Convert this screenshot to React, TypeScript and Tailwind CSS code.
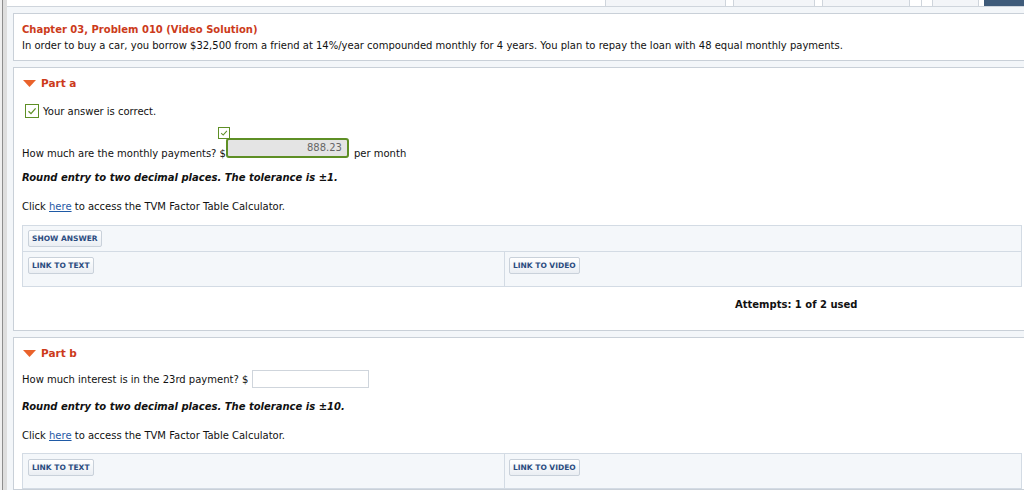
import React from 'react';

const font = { fontFamily: '"DejaVu Sans", Verdana, sans-serif' };

const Tri = () => (
  <svg width="13" height="8" viewBox="0 0 13 8" className="shrink-0">
    <polygon points="0,0 13,0 6.5,7" fill="#e9622b" />
  </svg>
);

const Check = ({ size }: { size: number }) => (
  <span
    className="inline-flex items-center justify-center border border-[#5e8f25] bg-white shrink-0"
    style={{ width: size, height: size }}
  >
    <svg width={size - 4} height={size - 4} viewBox="0 0 10 10">
      <path d="M1.5 5.2 L4 7.6 L8.6 2.4" stroke="#5e8f25" strokeWidth="1.3" fill="none" />
    </svg>
  </span>
);

const Btn = ({ label }: { label: string }) => (
  <span className="inline-flex items-center h-[17px] px-[3px] rounded-[2px] border border-[#c9d1da] bg-gradient-to-b from-white to-[#eaeef3] text-[7.5px] font-bold text-[#2b4c80]">
    {label}
  </span>
);

const LinkRow = () => (
  <div className="flex h-[34px]">
    <div className="w-[482px] border-r border-[#d3dbe4] pl-[5px] pt-[5px]">
      <Btn label="LINK TO TEXT" />
    </div>
    <div className="flex-1 pl-[4px] pt-[5px]">
      <Btn label="LINK TO VIDEO" />
    </div>
  </div>
);

const Here = () => <span className="text-[#1f5aa6] underline">here</span>;

export default function App() {
  return (
    <div className="w-[1024px] h-[490px] overflow-hidden flex bg-white text-[#111]" style={font}>
      <div className="flex shrink-0">
        <div className="w-[2px] bg-[#efefef]" />
        <div className="w-[1px] bg-[#8e8e8e]" />
        <div className="w-[4px] bg-[#dedede]" />
      </div>
      <div className="flex-1 flex flex-col min-w-0">
        <div className="h-[7px] flex items-end overflow-hidden border-b border-[#cfd5dc] shrink-0">
          <div className="w-[598px] shrink-0" />
          <div className="w-[121px] h-[16px] rounded-[3px] border border-[#cfd5dc] bg-[#f3f5f8] shrink-0 -mb-[4px]" />
          <div className="w-[82px] h-[16px] rounded-[3px] border border-[#cfd5dc] bg-[#f3f5f8] shrink-0 ml-[7px] -mb-[4px]" />
          <div className="w-[88px] h-[16px] rounded-[3px] border border-[#cfd5dc] bg-[#f3f5f8] shrink-0 ml-[7px] -mb-[4px]" />
          <div className="w-[1px] h-[7px] bg-[#cfd5dc] ml-[11px] shrink-0 self-start" />
          <div className="w-[47px] h-[16px] rounded-[3px] border border-[#cfd5dc] bg-[#f3f5f8] shrink-0 ml-[10px] -mb-[4px]" />
          <div className="w-[60px] h-[16px] rounded-[3px] bg-[#3f5b7a] shrink-0 ml-[5px] -mb-[4px]" />
        </div>
        <div className="flex-1 bg-[#f3f6f9] pl-[6px] pt-[6px] flex flex-col gap-[6px] w-[1040px]">
          <div className="border border-[#c9d0d8] bg-white h-[48px] pl-[8px] pt-[8px] text-[10px] leading-[16px]">
            <div className="font-bold text-[#cc3b1b]">Chapter 03, Problem 010 (Video Solution)</div>
            <div>In order to buy a car, you borrow $32,500 from a friend at 14%/year compounded monthly for 4 years. You plan to repay the loan with 48 equal monthly payments.</div>
          </div>

          <div className="border border-[#c9d0d8] bg-white h-[264px] pl-[8px] text-[10px]">
            <div className="flex items-center gap-[5px] pl-[1px] h-[14px] mt-[9px]">
              <Tri />
              <span className="font-bold text-[#cc3b1b] text-[10.5px]">Part a</span>
            </div>
            <div className="flex items-center gap-[4px] pl-[3px] mt-[13px] h-[14px]">
              <Check size={14} />
              <span>Your answer is correct.</span>
            </div>
            <div className="flex items-end mt-[7px] h-[33px]">
              <span className="-mb-[3px]">How much are the monthly payments? $</span>
              <div className="flex flex-col">
                <div className="-ml-[8px] mb-[-3px]">
                  <Check size={12} />
                </div>
                <div className="w-[123px] h-[20px] rounded-[3px] border-2 border-[#5e8f25] bg-[#e4e4e4] text-right pr-[5px] leading-[16px] text-[#666]">
                  888.23
                </div>
              </div>
              <span className="ml-[5px] -mb-[3px]">per month</span>
            </div>
            <div className="mt-[12px] font-bold italic">Round entry to two decimal places. The tolerance is ±1.</div>
            <div className="mt-[14px]">Click <Here /> to access the TVM Factor Table Calculator.</div>
            <div className="mt-[11px] mr-[8px] w-[1000px] border border-[#d3dbe4] bg-[#f4f7fa]">
              <div className="h-[26px] border-b border-[#d3dbe4] pl-[5px] pt-[4px]">
                <Btn label="SHOW ANSWER" />
              </div>
              <LinkRow />
            </div>
            <div className="mt-[10px] pl-[713px] font-bold">Attempts: 1 of 2 used</div>
          </div>

          <div className="border border-[#c9d0d8] bg-white flex-1 pl-[8px] text-[10px]">
            <div className="flex items-center gap-[5px] pl-[1px] h-[14px] mt-[9px]">
              <Tri />
              <span className="font-bold text-[#cc3b1b] text-[10.5px]">Part b</span>
            </div>
            <div className="flex items-center mt-[9px] h-[18px]">
              <span>How much interest is in the 23rd payment? $</span>
              <div className="ml-[4px] w-[117px] h-[18px] border border-[#cfd5dc] bg-white" />
            </div>
            <div className="mt-[11px] font-bold italic">Round entry to two decimal places. The tolerance is ±10.</div>
            <div className="mt-[14px]">Click <Here /> to access the TVM Factor Table Calculator.</div>
            <div className="mt-[10px] w-[1000px] border border-[#d3dbe4] bg-[#f4f7fa]">
              <LinkRow />
            </div>
          </div>
        </div>
      </div>
    </div>
  );
}
